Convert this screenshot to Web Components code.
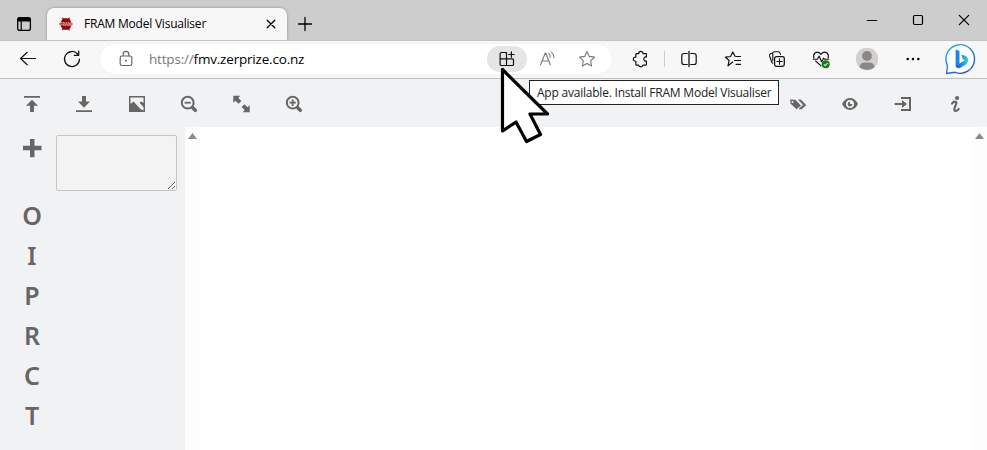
<!DOCTYPE html>
<html lang="en">
<head>
<meta charset="utf-8">
<title>FRAM Model Visualiser</title>
<style>
html,body{margin:0;width:100%;height:100%;overflow:hidden;background:#fff}
body{font-family:"Open Sans","Noto Sans",sans-serif;font-size:12px;color:#111}
</style>
</head>
<body>
<browser-window></browser-window>
<script>
// Every glyph is drawn around the origin, one unit per pixel.
const L = (d, w = 1.2, c = 'currentColor') => `<path d="${d}" fill="none" stroke="${c}" stroke-width="${w}" stroke-linecap="round" stroke-linejoin="round"/>`;
const F = (d) => `<path d="${d}" fill="currentColor" fill-rule="evenodd"/>`;
const ICONS = {
  workspace: `<rect x="-6.3" y="-6.3" width="12.7" height="12.7" rx="2.2" fill="none" stroke="currentColor" stroke-width="1.3"/><path d="M-6.5-2.5V-5Q-6.5-7-4.5-7H4.5Q6.500-7 6.500-5V-2.500Z" fill="currentColor"/>` + L('M-2.8-3V6.200', 1.2),
  fram: `<path d="M-4-6.500L-3-5M4-6.500L3-5M-7 0H7M-4 6.500L-3 5M4 6.500L3 5" stroke="#c98d8d" stroke-width="1.500"/><path d="M-3.200-5.700H3.200L6.300 0 3.200 5.700H-3.200L-6.300 0Z" fill="#8b0a0a"/><text y="1.500" text-anchor="middle" font-family="Open Sans,sans-serif" font-size="4.300" font-weight="700" fill="#e9baba">FRAM</text>`,
  closeTab: L('M-3.800-3.800L3.800 3.800M3.800-3.800L-3.800 3.800', 1.3),
  plusTab: L('M-6.500 0H6.500M0-6.500V6.500', 1.3),
  min: L('M-4.700 .5H4.700', 1.1),
  max: `<rect x="-4.500" y="-4.500" width="9" height="9" rx="1.200" fill="none" stroke="currentColor" stroke-width="1.200"/>`,
  close: L('M-4.700-4.700L4.700 4.700M4.700-4.700L-4.700 4.700', 1.2),
  back: L('M-.8-6.700L-7.500-.5-.8 5.800M-7.300-.5H7.500', 1.2),
  reload: L('M5.600-5A7.500 7.500 0 1 0 7.500 0M6.700-7.800V-3.700H2.300', 1.25),
  lock: `<rect x="-5.800" y="-3" width="11.600" height="9.500" rx="1.800" fill="none" stroke="currentColor" stroke-width="1.200"/>` + L('M-2.800-3.200V-5Q-2.800-7.600 0-7.600T2.800-5V-3.200') + `<circle cy="1.700" r="1"  fill="currentColor"/>`,
  install: L('M-.5-6.500V6.500M-6.900-.2H5.500Q6.500-.2 6.500 .8V5.200Q6.500 6.500 5.200 6.500H-5.500Q-6.900 6.500-6.900 5.200V-5.200Q-6.900-6.500-5.500-6.500H-1.500Q-.5-6.500-.5-5.500M4.400-7.200V-1.800M1.700-4.500H7.100', 1.2),
  read: L('M-6.400 5.800L-1.700-6H-1.300L3.300 5.800M-4.800 2H1.700', 1.1) + L('M1.700-6Q3.600-4.100 3.300-1.500M4.300-7.300Q7.200-4.300 7.100-1', 1),
  star: L('M0-7.400L2.300-2.600 7.500-1.900 3.700 1.800 4.600 7 0 4.600-4.600 7-3.700 1.800-7.500-1.900-2.300-2.600Z', 1.1),
  puzzle: `<g transform="translate(.8 0)">` + L('M-4.800-5.300H-2.100C-2.100-8.300 2.200-8.300 2.200-5.300H5.600V-2C2.200-2.800 2.200 2.600 5.600 2V5.400Q5.600 6.200 4.600 6.200H2.200C1.800 8.300-1.800 8.300-2.200 6.200H-4Q-5 6.200-5 5.200V2.300C-8.300 2.400-8.300-2.100-5-1.900Z', 1.2) + `</g>`,
  split: L('M-1.700-5.500H-5Q-7.200-5.500-7.200-3.200V3.200Q-7.200 5.500-5 5.500H-1.700M1.700-5.500H5Q7.200-5.500 7.200-3.200V3.200Q7.200 5.500 5 5.500H1.700', 1.2) + L('M0-7.500V7.500', 1.3),
  favs: L('M-.3 3L-5 6.800-3.900 1.500-7.500-1.800-2.500-2.500-.2-7 2-2.800M3-2.500H7.500M1.500 1.500H7.500M3 5.300H7.500', 1.2),
  collections: `<rect x="-2.400" y="-2.400" width="9.700" height="9.700" rx="1.800" fill="none" stroke="currentColor" stroke-width="1.250"/>` + L('M2.500-.2V5.200M-.2 2.500H5.200M-4.200 4.200Q-5.400 3.500-5.600 2.300L-7.400-3Q-7.900-4.800-6.200-5.400L-4.300-6Q-3.700-7.300-2.300-7.300H1Q2.900-7.300 3.200-5.600L3.500-4.600M-4.200-5.400V1.700', 1.1),
  heart: L('M-7.200-1Q-8.100-4.400-5.700-6.200-2.600-8 0-4.600 2.600-8 5.700-6.200 8.100-4.400 7.200-1M-5.400 2L0 6.800M-7.800 .2H-3.700L-1.900-3 .6 2.800 2.600-.8 3.600 .2H7.500', 1.1) + `<circle cx="4.700" cy="5.300" r="4" fill="#107c10"/><path d="M2.800 5.400L4.200 6.700 6.800 3.900" fill="none" stroke="#d5ebd5" stroke-width="1.100"/>`,
  profile: `<circle r="11.200" fill="#d2d0ce"/><circle cy="-3" r="4.900" fill="#8a8886"/><path d="M-7.500 8.200Q-7 3.800-2.800 3.500H2.800Q7 3.800 7.500 8.200A11.200 11.200 0 0 1-7.500 8.200Z" fill="#8a8886"/>`,
  dots: `<circle cx="-5.300" r="1.250"/><circle r="1.250"/><circle cx="5.300" r="1.250"/>`,
  bing: `<defs><linearGradient id="a" x1="0" y1="0" x2=".6" y2="1"><stop stop-color="#29b6ea"/><stop offset="1" stop-color="#2358ce"/></linearGradient><linearGradient id="b"><stop stop-color="#1b50cf"/><stop offset="1" stop-color="#35d0e8"/></linearGradient></defs><g transform="translate(.8 0)"><path d="M-14.200 14.500L-13.300 6.500A14.300 14.300 0 1 1-5.800 13.300Z" fill="#fff" stroke="url(#a)" stroke-width="1.400" stroke-linejoin="round"/><path d="M-5.200-9.500L-1.300-8V4.700L-5.200 7.800Z" fill="#1c86ed"/><path d="M-5.200 7.200Q-3.700 9.800-.8 9L5.300 5.400Q7.800 3.200 7.300 .2 6.700-2.500 3.700-3.400L.4-4.200 2.200 .3 4 1.300-1.300 4.400Z" fill="url(#b)"/></g>`,
  upload: F('M-8-8H8V-6.300H-8ZM0-4.300L6 1.700H2V8H-2V1.700H-6Z'),
  download: F('M-8 6.300H8V8H-8ZM-2-8H2V-2.500H6L0 3.800-6-2.500H-2Z'),
  image: F('M-8-8H8V8H-8ZM-6.500-6.500V0L-3.500-2.500 3.500 5 6.500 6.500V3L2.500-1.200 4.500-2.500 6.500-1V-6.500Z'),
  zoomOut: `<circle cx="-1.300" cy="-1.300" r="5.900" fill="none" stroke="currentColor" stroke-width="2"/>` + L('M3.700 3.700L6.300 6.300', 3.5) + F('M-4.400-2.200H1.800V-.4H-4.400Z'),
  zoomIn: `<circle cx="-1.300" cy="-1.300" r="5.900" fill="none" stroke="currentColor" stroke-width="2"/>` + L('M3.700 3.700L6.300 6.300', 3.5) + F('M-4.500-2.200H-2.200V-4.500H-.4V-2.200H1.900V-.4H-.4V1.900H-2.200V-.4H-4.500Z'),
  fit: `<g transform="translate(.5 0)">` + F('M-8.200-8.200H-1.300L-3.200-6.100-.1-3-2.900-.2-6-3.300-8.200-1.300ZM8.200 8.200H1.300L3.200 6.100.1 3 2.900.2 6 3.300 8.200 1.300Z') + `</g>`,
  tags: F('M-7.800-4.500L-2.700-4.200 3 1.500-1.500 5.300-7.600-.4ZM-5.500-3A1 1 0 1 0-5.500-1 1 1 0 1 0-5.500-3ZM0-4.500H2.700L8.200 1 3.700 5.300H1.500L1 4.300 5 .9Z'),
  eye: F('M-8 0Q-4.800-5.900 0-5.900T8 0Q4.800 5.900 0 5.900T-8 0ZM0-4A4 4 0 0 0 0 4 4 4 0 0 0 0-4ZM0-2.200V0H2.300A2.300 2.300 0 1 1 0-2.200Z'),
  login: F('M-2-7H8V7H-2V5H6V-5H-2ZM-8.500-1H-1V-4L4 0-1 4V1H-8.500Z'),
  info: `<g transform="translate(.7 0)"><circle cx="1.400" cy="-6" r="2.100" fill="currentColor"/>` + L('M-3.600-.5C-1.700-3 1.700-3 .4.100L-1.200 4.200C-2.300 7.700 1.500 7.600 3 5', 2.2) + `</g>`,
  plus: F('M-2-9H2.500V-2.300H9.500V2.300H2.500V9.200H-2V2.300H-9V-2.300H-2Z')
};

const define = (name, html, init) => {
  const t = document.createElement('template');
  t.innerHTML = html;
  customElements.define(name, class extends HTMLElement {
    constructor() {
      super();
      this.attachShadow({mode: 'open'}).append(t.content.cloneNode(true));
    }
    connectedCallback() { if (init) init(this, this.shadowRoot); }
  });
};

define('ui-icon', `<style>:host{display:flex;flex:none;align-items:center;justify-content:center;width:44px;height:32px}svg{display:block;width:32px;height:32px;overflow:visible}</style><svg viewBox="-16 -16 32 32"></svg>`,
  (el, root) => { root.querySelector('svg').innerHTML = ICONS[el.getAttribute('name')]; });

define('browser-tab', `<style>
:host{display:flex;box-sizing:border-box;width:240px;height:32px;margin-top:8px;align-items:center;background:#f7f7f7;border-radius:7px 7px 0 0;position:relative;z-index:1;box-shadow:0 0 3px #0005;clip-path:inset(-4px -4px 0 -4px)}
.t{flex:1;white-space:nowrap;font-size:12px;letter-spacing:-.22px;line-height:32px}
ui-icon{width:32px}ui-icon[name=fram]{width:34px;margin:0 1px 0 2px}
</style><ui-icon name="fram"></ui-icon><span class="t"><slot></slot></span><ui-icon name="closeTab"></ui-icon>`);

define('tab-strip', `<style>
:host{display:flex;height:40px;background:#cdcdcd;color:#000}
.ws{width:47px;margin-top:8px}
.new{width:35px;margin-top:8px}
.win{display:flex;margin-left:auto;margin-top:4px}
.win ui-icon{width:46px}
</style><ui-icon class="ws" name="workspace"></ui-icon><browser-tab>FRAM Model Visualiser</browser-tab><ui-icon class="new" name="plusTab"></ui-icon>
<div class="win"><ui-icon name="min"></ui-icon><ui-icon name="max"></ui-icon><ui-icon name="close"></ui-icon></div>`);

define('address-bar', `<style>
:host{display:flex;box-sizing:border-box;flex:none;width:512px;height:30px;margin:0 6px;padding-left:4px;align-items:center;background:#fff;border-radius:15px;box-shadow:0 0 3px #0000000d}
ui-icon{width:40px;color:#777}
ui-icon[name=lock]{width:44px;color:#666}
.url{flex:1;margin-left:1px;font-size:13.500px;letter-spacing:-.19px;line-height:30px;color:#767676;white-space:nowrap}
::slotted(b){font-weight:400;color:#000}
.hot{display:flex;width:40px;height:26px;align-items:center;border-radius:13px;background:#e5e5e5}
.hot ui-icon{color:#111}
ui-icon[name=star]{margin-right:5px}
</style><ui-icon name="lock"></ui-icon><span class="url"><slot></slot></span><span class="hot"><ui-icon name="install"></ui-icon></span><ui-icon name="read"></ui-icon><ui-icon name="star"></ui-icon>`);

define('nav-bar', `<style>
:host{display:flex;box-sizing:border-box;height:39px;padding:0 0 1px 6px;align-items:center;background:#f7f7f7;border-top:1px solid #c3c3c3;border-bottom:1px solid #bdbdbd}
i{flex:none;width:1px;height:16px;margin:0 2px;background:#ccc}
ui-icon[name=profile]{width:48px}ui-icon[name=bing]{width:50px}
</style><ui-icon name="back"></ui-icon><ui-icon name="reload"></ui-icon><address-bar>https://<b>fmv.zerprize.co.nz</b></address-bar><ui-icon name="puzzle"></ui-icon><i></i><ui-icon name="split"></ui-icon><ui-icon name="favs"></ui-icon><ui-icon name="collections"></ui-icon><ui-icon name="heart"></ui-icon><ui-icon name="profile"></ui-icon><ui-icon name="dots"></ui-icon><ui-icon name="bing"></ui-icon>`);

define('app-toolbar', `<style>
:host{display:flex;box-sizing:border-box;height:48px;padding:2px 6px 0;align-items:center;justify-content:space-between;background:#f1f2f4;color:#666}
div{display:flex}ui-icon{width:52.300px}
</style><div><ui-icon name="upload"></ui-icon><ui-icon name="download"></ui-icon><ui-icon name="image"></ui-icon><ui-icon name="zoomOut"></ui-icon><ui-icon name="fit"></ui-icon><ui-icon name="zoomIn"></ui-icon></div>
<div><ui-icon name="tags"></ui-icon><ui-icon name="eye"></ui-icon><ui-icon name="login"></ui-icon><ui-icon name="info"></ui-icon></div>`);

define('side-panel', `<style>
:host{display:flex;box-sizing:border-box;flex:none;width:185px;padding:8px 8px 0 12px;background:#f1f2f4;color:#666}
.keys{display:flex;flex-direction:column;width:40px;align-items:center;margin-right:4px}
.keys ui-icon{width:40px;height:26px;margin-bottom:34px}
.keys span{height:40px;font:600 25px/40px "Noto Sans",sans-serif}
textarea{box-sizing:border-box;width:121px;height:56px;margin:0;padding:2px;border:1px solid #c6c6c6;border-radius:2px;background:#f3f3f3;resize:both;overflow:hidden}
</style><div class="keys"><ui-icon name="plus"></ui-icon><span>O</span><span>I</span><span>P</span><span>R</span><span>C</span><span>T</span></div><textarea aria-label="Function name"></textarea>`);

define('scroll-gutter', `<style>
:host{display:flex;flex:none;width:15px;justify-content:center;background:#fcfcfc}
svg{width:9px;height:6px;margin-top:6px}
</style><svg viewBox="0 0 9 6"><path d="M0 6L4.500 0 9 6Z" fill="#8a8a8a"/></svg>`);

define('hover-tip', `<style>
:host{position:absolute;left:529px;top:80px;box-sizing:border-box;width:250px;height:25px;padding-left:7px;border:1px solid #222;background:#fff;color:#222;font-size:12px;line-height:24px;white-space:nowrap;letter-spacing:-.22px}
</style><slot></slot>`);

define('mouse-pointer', `<style>
:host{position:absolute;left:498px;top:64px;width:56px;height:84px}svg{display:block}
</style><svg width="56" height="84"><path d="M4.500 5.500V67L18 58 28.500 77.500 42.500 70.500 32 50H49.500Z" fill="#fff" stroke="#000" stroke-width="3.200" stroke-linejoin="round"/></svg>`);

define('browser-window', `<style>
:host{display:flex;flex-direction:column;position:relative;height:100vh;overflow:hidden}
main{display:flex;flex:1;min-height:0}
.canvas{flex:1;background:#fff}
</style><tab-strip></tab-strip><nav-bar></nav-bar><app-toolbar></app-toolbar><main><side-panel></side-panel><scroll-gutter></scroll-gutter><div class="canvas"></div><scroll-gutter></scroll-gutter></main>
<hover-tip>App available. Install FRAM Model Visualiser</hover-tip><mouse-pointer></mouse-pointer>`);
</script>
</body>
</html>
